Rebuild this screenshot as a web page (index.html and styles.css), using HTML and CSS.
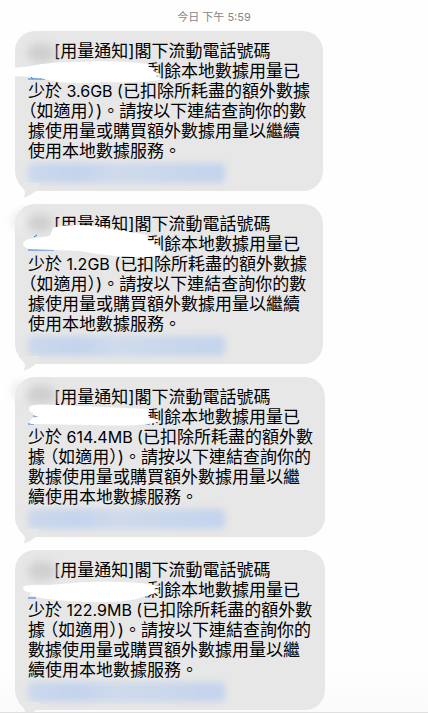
FILE: index.html
```html
<!DOCTYPE html>
<html lang="zh-Hant">
<head>
    <meta charset="UTF-8">
    <meta name="viewport" content="width=device-width, initial-scale=1.0">
    <title>用量通知</title>
    <link rel="stylesheet" href="styles.css">
</head>
<body>
    <main class="thread">
        <time class="stamp">今日 下午 5:59</time>

        <article class="bubble">
            <p>
                <span class="sender"></span>[用量通知]閣下流動電話號碼<br>
                <span class="number"></span>剩餘本地數據用量已<br>
                少於<span class="latin"> 3.6GB (</span>已扣除所耗盡的額外數據<br>
                <span class="half">（</span>如適用<span class="half">）</span>)。請按以下連結查詢你的數<br>
                據使用量或購買額外數據用量以繼續<br>
                使用本地數據服務。
            </p>
            <a class="link" href="#" aria-label="連結"></a>
            <svg class="tail" viewBox="0 0 24 16" aria-hidden="true"><path d="M3 0Q10 7 10 9Q10 13 8 15Q15 13 21 8L24 0Z"/></svg>
            <svg class="marks" viewBox="0 0 170 64" aria-hidden="true">
                <ellipse class="smudge" cx="36" cy="25" rx="14" ry="10"/>
                <path class="pen-link" d="M23 51h17M25 48l3 3M33 48l3 3"/>
                <path class="eraser" d="M9 40L26 38Q44 34 72 34Q115 32 142 36L144 39L150 40L148 43L156 46L151 48L158 51Q145 55 100 54Q55 57 40 51Q25 48 9 48Z"/>
            </svg>
        </article>

        <article class="bubble">
            <p>
                <span class="sender"></span>[用量通知]閣下流動電話號碼<br>
                <span class="number"></span>剩餘本地數據用量已<br>
                少於<span class="latin"> 1.2GB (</span>已扣除所耗盡的額外數據<br>
                <span class="half">（</span>如適用<span class="half">）</span>)。請按以下連結查詢你的數<br>
                據使用量或購買額外數據用量以繼續<br>
                使用本地數據服務。
            </p>
            <a class="link" href="#" aria-label="連結"></a>
            <svg class="tail" viewBox="0 0 24 16" aria-hidden="true"><path d="M3 0Q10 7 10 9Q10 13 8 15Q15 13 21 8L24 0Z"/></svg>
            <svg class="marks" viewBox="0 0 170 64" aria-hidden="true">
                <ellipse class="smudge pale" cx="17" cy="20" rx="10" ry="11"/>
                <ellipse class="smudge" cx="35" cy="22" rx="13" ry="9"/>
                <path class="pen-link" d="M23 49h26M29 36l3-2"/>
                <path class="eraser" d="M18 42Q20 38 30 37L45 35L48 27Q60 22 90 25L142 34L143 41L150 38L149 43L156 45L154 48L158 50Q157 57 130 56Q100 55 75 50L24 48Q18 46 18 42Z"/>
            </svg>
        </article>

        <article class="bubble wide">
            <p>
                <span class="sender"></span>[用量通知]閣下流動電話號碼<br>
                <span class="number"></span>剩餘本地數據用量已<br>
                少於<span class="latin"> 614.4MB (</span>已扣除所耗盡的額外數<br>
                據 <span class="half">（</span>如適用<span class="half">）</span>)。請按以下連結查詢你的<br>
                數據使用量或購買額外數據用量以繼<br>
                續使用本地數據服務。
            </p>
            <a class="link" href="#" aria-label="連結"></a>
            <svg class="tail" viewBox="0 0 24 16" aria-hidden="true"><path d="M3 0Q10 7 10 9Q10 13 8 15Q15 13 21 8L24 0Z"/></svg>
            <svg class="marks" viewBox="0 0 170 64" aria-hidden="true">
                <ellipse class="smudge pale" cx="16" cy="17" rx="9" ry="10"/>
                <ellipse class="smudge" cx="36" cy="21" rx="15" ry="10"/>
                <path class="pen-link" d="M23 50h6M28 42h8M140 50h5"/>
                <path class="eraser" d="M24 34Q24 29 50 31L144 35L143 44L148 44L154 47Q145 53 85 51L26 50Q22 48 28 44L34 43L28 41L28 39L25 38Z"/>
            </svg>
        </article>

        <article class="bubble wide">
            <p>
                <span class="sender"></span>[用量通知]閣下流動電話號碼<br>
                <span class="number"></span>剩餘本地數據用量已<br>
                少於<span class="latin"> 122.9MB (</span>已扣除所耗盡的額外數<br>
                據 <span class="half">（</span>如適用<span class="half">）</span>)。請按以下連結查詢你的<br>
                數據使用量或購買額外數據用量以繼<br>
                續使用本地數據服務。
            </p>
            <a class="link" href="#" aria-label="連結"></a>
            <svg class="tail" viewBox="0 0 24 16" aria-hidden="true"><path d="M3 0Q10 7 10 9Q10 13 8 15Q15 13 21 8L24 0Z"/></svg>
            <svg class="marks" viewBox="0 0 170 64" aria-hidden="true">
                <ellipse class="smudge" cx="37" cy="24" rx="14" ry="10"/>
                <path class="pen-link" d="M23 51h8M140 50h5"/>
                <path class="eraser" d="M18 41Q18 37 45 38Q90 32 135 36L157 39L149 42L155 44L148 47L140 49Q125 56 85 55Q50 54 31 50L24 48L28 46Q18 45 18 41Z"/>
            </svg>
        </article>
    </main>
</body>
</html>
```
FILE: styles.css
```css
* {
    box-sizing: border-box;
}
body {
    margin: 0;
    background: #fefefe;
    color: #000;
    font-family: Inter, "Noto Sans CJK TC", sans-serif;
    font-size: 17px;
    line-height: 20px;
    overflow: hidden;
}
.thread {
    display: flex;
    flex-direction: column;
    align-items: flex-start;
    gap: 13px;
    height: 100vh;
    padding: 7px 15px 0;
    border-bottom: 1px solid #dedede;
    background: linear-gradient(#fefefe 94%, #fafafa);
    overflow: hidden;
}
.stamp {
    align-self: center;
    margin-bottom: -9px;
    color: #858585;
    font-size: 11px;
}
.bubble {
    position: relative;
    flex: none;
    width: 308px;
    padding: 10px 13px 8px;
    border-radius: 20px;
    background: #e7e7e7;
}
.bubble.wide {
    width: 310px;
}
.bubble p {
    margin: 0;
    white-space: nowrap;
}
.sender, .number {
    display: inline-block;
    width: 26px;
}
.number {
    width: 119px;
}
.latin {
    font-size: 16px;
    line-height: 1;
}
.half {
    font-feature-settings: "halt";
}
.link {
    display: block;
    width: 197px;
    height: 20px;
    margin-top: 2px;
    border-radius: 5px;
    background: linear-gradient(90deg, #cbd8ec, #c4d4ed 25%, #cfdaec 45%, #c9d7ec 70%, #c4d4ed);
    filter: blur(3px);
}
.tail {
    position: absolute;
    left: 0;
    bottom: -8px;
    width: 24px;
    height: 16px;
    fill: #e7e7e7;
}
.marks {
    position: absolute;
    top: -3px;
    left: -10px;
    width: 170px;
    height: 64px;
    overflow: visible;
}
.smudge {
    fill: #cfcfcf;
    filter: blur(4px);
}
.smudge.pale {
    fill: #ececec;
}
.eraser {
    fill: #fff;
}
.pen-link {
    fill: none;
    stroke: #3478d8;
    stroke-width: 1;
}
```
